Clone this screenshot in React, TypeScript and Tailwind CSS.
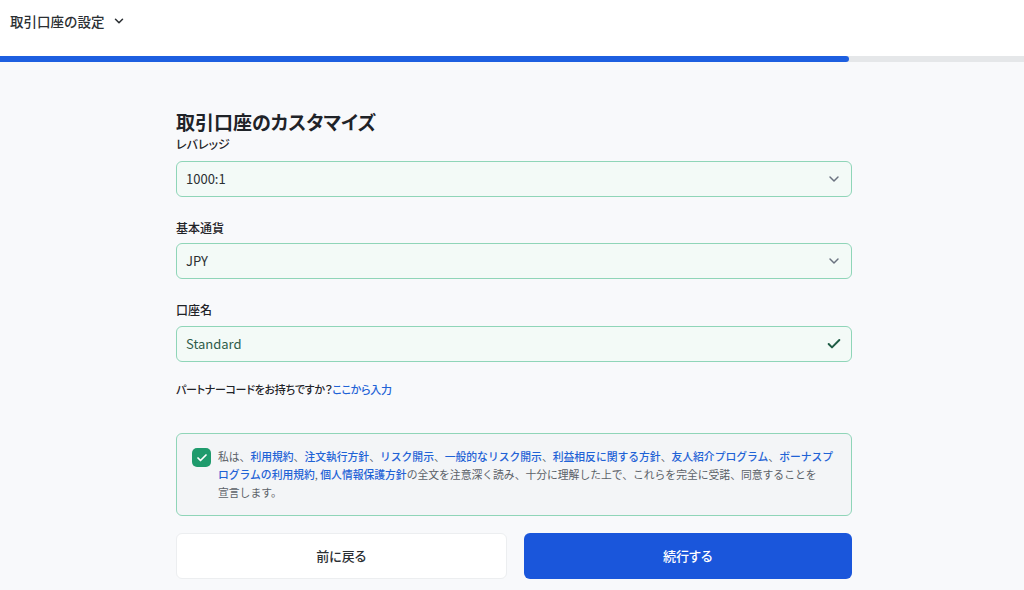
import { ChevronDown, Check } from 'lucide-react';

const font = {
  fontFamily: '"Noto Sans CJK JP", "Noto Sans", Inter, sans-serif',
  fontFeatureSettings: '"palt"',
};

function SelectField({ label, value, labelGap }: { label: string; value: string; labelGap: string }) {
  return (
    <div className="mb-[23px]">
      <label className={`block text-[12px] leading-4 font-medium text-[#1f2328] ${labelGap}`}>{label}</label>
      <div className="flex items-center justify-between h-9 px-[9px] rounded-md border border-[#8fd5b8] bg-[#f3faf7] text-[13px] text-[#2b2f33]">
        <span>{value}</span>
        <ChevronDown className="w-4 h-4 text-[#6b7280]" strokeWidth={2.2} />
      </div>
    </div>
  );
}

export default function App() {
  const links = [
    '利用規約',
    '注文執行方針',
    'リスク開示',
    '一般的なリスク開示',
    '利益相反に関する方針',
    '友人紹介プログラム',
  ];

  return (
    <div className="w-[1024px] h-[590px] overflow-hidden bg-[#f8f9fb]" style={font}>
      {/* header */}
      <div className="h-[56px] bg-white flex items-start pl-[10px] pt-[11px]">
        <div className="flex items-center gap-[7px] text-[13.5px] font-medium text-[#2b2f33] [font-feature-settings:normal]">
          <span>取引口座の設定</span>
          <ChevronDown className="w-[14px] h-[14px]" strokeWidth={2.6} />
        </div>
      </div>
      {/* progress */}
      <div className="h-[6px] bg-[#e5e7e9] flex">
        <div className="w-[849px] h-full bg-[#1d5fe0] rounded-r-full" />
      </div>

      <div className="w-[676px] ml-[176px] pt-[46px]">
        <h1 className="text-[19px] leading-7 font-bold text-[#1f2328]">取引口座のカスタマイズ</h1>

        <SelectField label="レバレッジ" value="1000:1" labelGap="mb-[9px]" />
        <SelectField label="基本通貨" value="JPY" labelGap="mb-[7px]" />

        <div>
          <label className="block text-[12px] leading-4 font-medium text-[#1f2328] mb-2">口座名</label>
          <div className="flex items-center justify-between h-9 px-[9px] rounded-md border border-[#8fd5b8] bg-[#f3faf7] text-[13px] text-[#2f5d4a]">
            <span>Standard</span>
            <Check className="w-4 h-4 text-[#1f5c45]" strokeWidth={3} />
          </div>
        </div>

        <p className="mt-[17px] text-[11px] tracking-[-0.3px] leading-5 font-medium text-[#1f2328]">
          パートナーコードをお持ちですか？<span className="text-[#1f63d6]">ここから入力</span>
        </p>

        <div className="mt-[34px] h-[83px] rounded-md border border-[#8fd5b8] bg-[#f3f5f7] flex pl-[15px] pr-[16px] pt-[13px]">
          <div className="w-[19px] h-[19px] mt-[1px] shrink-0 rounded-[5px] bg-[#1f9b6d] flex items-center justify-center">
            <Check className="w-[12px] h-[12px] text-white" strokeWidth={3.5} />
          </div>
          <p className="ml-[7px] text-[10.8px] leading-[18px] text-[#5b6167] [font-feature-settings:normal]">
            私は、
            {links.map((l) => (
              <span key={l}>
                <span className="text-[#1f63d6] font-medium">{l}</span>、
              </span>
            ))}
            <span className="text-[#1f63d6] font-medium">ボーナスプログラムの利用規約</span>,{' '}
            <span className="text-[#1f63d6] font-medium">個人情報保護方針</span>
            の全文を注意深く読み、十分に理解した上で、これらを完全に受諾、同意することを
            <span className="whitespace-nowrap">宣言します。</span>
          </p>
        </div>

        <div className="mt-[17px] flex gap-[17px]">
          <button className="flex-1 h-[46px] rounded-md border border-[#eceef0] bg-white text-[13px] font-medium text-[#2b2f33]">
            前に戻る
          </button>
          <button className="flex-1 h-[46px] rounded-md bg-[#1a56db] text-[13px] font-medium text-white">
            続行する
          </button>
        </div>
      </div>
    </div>
  );
}
